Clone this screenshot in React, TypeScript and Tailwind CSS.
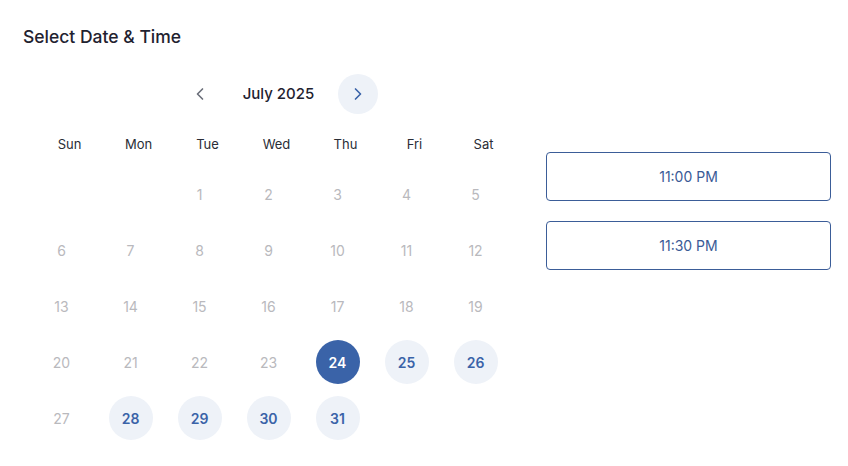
import { ChevronLeft, ChevronRight } from 'lucide-react';

const dayNames = ['Sun', 'Mon', 'Tue', 'Wed', 'Thu', 'Fri', 'Sat'];
const times = ['11:00 PM', '11:30 PM'];

const App: React.FC = () => {
  const firstDay = 2; // July 1 2025 is a Tuesday
  const cells: (number | null)[] = [
    ...Array.from({ length: firstDay }, () => null),
    ...Array.from({ length: 31 }, (_, i) => i + 1),
  ];
  const selected = 24;

  return (
    <div className="w-[848px] h-[466px] bg-white pl-[23px] pt-[26px] font-['Inter',sans-serif]">
      <h1 className="text-[17.5px] leading-[22px] font-medium text-[#1f2230]">Select Date &amp; Time</h1>

      <div className="flex mt-[26px]">
        <div className="w-[483px] ml-[4px]">
          {/* month nav */}
          <div className="flex items-center justify-center h-10 pl-[20px]">
            <button className="w-10 h-10 flex items-center justify-center rounded-full text-[#6b6f7a]">
              <ChevronLeft size={20} strokeWidth={2} />
            </button>
            <div className="w-[118px] text-center text-[15px] font-medium text-[#1f2230]">July 2025</div>
            <button className="w-10 h-10 flex items-center justify-center rounded-full bg-[#eef2f8] text-[#3a63a8]">
              <ChevronRight size={20} strokeWidth={2} />
            </button>
          </div>

          {/* weekday header */}
          <div className="grid grid-cols-7 w-[483px] mt-[20px] ml-[8px]">
            {dayNames.map((d) => (
              <div key={d} className="text-center text-[13px] leading-5 text-[#2a2d36]">
                {d}
              </div>
            ))}
          </div>

          {/* dates */}
          <div className="grid grid-cols-7 gap-y-3 mt-[18px]">
            {cells.map((day, i) => {
              if (day === null) return <div key={i} className="h-11" />;
              const isSelected = day === selected;
              const available = day > selected && i % 7 !== 0;
              return (
                <div key={i} className="flex justify-center">
                  <div
                    className={`w-11 h-11 rounded-full flex items-center justify-center text-[14px] ${
                      isSelected
                        ? 'bg-[#3a63a8] text-white font-semibold'
                        : available
                        ? 'bg-[#eef2f8] text-[#3a63a8] font-semibold'
                        : 'text-[#b9b9bd]'
                    }`}
                  >
                    {day}
                  </div>
                </div>
              );
            })}
          </div>
        </div>

        {/* time slots */}
        <div className="ml-[36px] mt-[78px] w-[285px] flex flex-col gap-[20px]">
          {times.map((t) => (
            <button
              key={t}
              className="h-[49px] w-full rounded-[4px] border border-[#3b5d98] text-[14px] leading-5 pt-[1px] text-[#3a5a96] bg-white"
            >
              {t}
            </button>
          ))}
        </div>
      </div>
    </div>
  );
};

export default App;
